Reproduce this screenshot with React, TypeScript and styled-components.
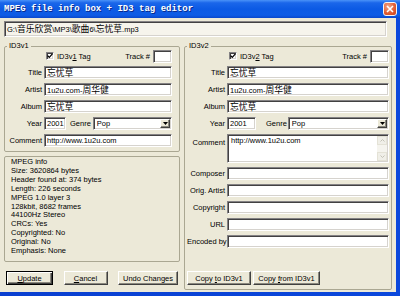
import React from 'react'
import styled, { createGlobalStyle, css } from 'styled-components'

const GlobalStyle = createGlobalStyle`
	html, body {
		margin: 0;
		padding: 0;
	}
	body {
		font-family: "Liberation Sans", Arial, "Noto Sans CJK SC", sans-serif;
		font-size: 7.5px;
		color: #000;
		background: #fff;
	}
`

// classic 3D edges, used by every edit box and every push button
const sunken = css`
	box-sizing: border-box;
	border: 1px solid;
	border-color: #848284 #fff #fff #848284;
	box-shadow: inset 1px 1px 0 #424142, inset -1px -1px 0 #d6d3ce;
`

const raised = css`
	box-sizing: border-box;
	border: 1px solid;
	border-color: #fff #404040 #404040 #fff;
	box-shadow: inset -1px -1px 0 #8a887e;
	background: #ece9d8;
`

const Window = styled.div`
	width: 400px;
	height: 296px;
	display: flex;
	flex-direction: column;
	background: linear-gradient(to right, #0a3fd0, #0b48dc);
	overflow: hidden;
`

const TitleBar = styled.div`
	height: 18px;
	flex: none;
	display: flex;
	align-items: center;
	padding: 0 3px 0 4px;
	background: linear-gradient(to bottom, #4a92f8 0%, #1a66ea 16%, #0c5ae4 50%, #0e5ce6 84%, #0a48cc 100%);
`

const Caption = styled.span`
	flex: 1;
	font-family: "Liberation Mono", "Courier New", monospace;
	font-weight: bold;
	font-size: 9px;
	color: #fff;
	white-space: nowrap;
	text-shadow: 1px 1px 0 #0a2a8a;
`

const CloseButton = styled.button`
	width: 14px;
	height: 14px;
	padding: 0;
	border: 1px solid #f4f4f4;
	border-radius: 3px;
	background: radial-gradient(circle at 35% 30%, #f2a486, #e15a30 60%, #c8441e);
	display: grid;
	place-items: center;
`

const Body = styled.div`
	flex: 1;
	min-height: 0;
	margin: 0 4px 4px 0;
	padding: 3px 4px 2px 4px;
	background: #ece9d8;
	display: flex;
	flex-direction: column;
	gap: 5px;
`

const PathField = styled.div`
	${sunken}
	height: 16px;
	margin-right: 5px;
	padding: 0 2px;
	background: #f6f4ec;
	line-height: 14px;
	white-space: nowrap;
`

const Cjk = styled.span`
	font-family: "Noto Sans CJK SC", sans-serif;
	font-size: 8.8px;
`

const Columns = styled.div`
	flex: 1;
	min-height: 0;
	display: grid;
	grid-template-columns: 176px 208px;
	column-gap: 4px;
`

const LeftColumn = styled.div`
	display: flex;
	flex-direction: column;
`

const Group = styled.fieldset<{ $padRight: number; $padBottom: number }>`
	margin: 0;
	min-inline-size: 0;
	padding: 0 ${p => p.$padRight}px ${p => p.$padBottom}px 2px;
	border: 1px solid #aaa792;
	border-radius: 2px;
	display: flex;
	flex-direction: column;
`

const Legend = styled.legend`
	padding: 0 2px;
	line-height: 8px;
`

const FormGrid = styled.div<{ $label: number }>`
	display: grid;
	grid-template-columns: ${p => p.$label}px 1fr;
	column-gap: 2px;
	row-gap: 4px;
	align-items: center;
`

const Label = styled.span<{ $top?: boolean }>`
	text-align: right;
	white-space: nowrap;
	${p => p.$top && css`
		align-self: start;
		margin-top: 4px;
	`}
`

const Field = styled.div<{ $w?: number }>`
	${sunken}
	height: 13px;
	padding: 0 2px;
	background: #fff;
	line-height: 11px;
	white-space: nowrap;
	overflow: hidden;
	${p => p.$w !== undefined && css`
		width: ${p.$w}px;
		flex: none;
	`}
`

const TagRow = styled.div`
	grid-column: 2;
	height: 12px;
	display: flex;
	align-items: center;
`

const CheckBox = styled.span`
	${sunken}
	width: 8px;
	height: 8px;
	margin: 0 3px 0 2px;
	background: #fff;
	display: grid;
	place-items: center;
`

const TrackLabel = styled.span`
	margin: 0 3px 0 auto;
`

const U = styled.span`
	text-decoration: underline;
`

const YearRow = styled.div`
	display: flex;
	align-items: center;
`

const GenreLabel = styled.span<{ $before: number; $after: number }>`
	margin: 0 ${p => p.$after}px 0 ${p => p.$before}px;
`

const Select = styled.div`
	${sunken}
	flex: 1;
	height: 13px;
	background: #fff;
	display: flex;
	padding: 1px;
`

const SelectText = styled.span`
	flex: 1;
	padding-left: 2px;
	line-height: 10px;
`

const DropButton = styled.span`
	${raised}
	width: 10px;
	display: grid;
	place-items: center;
`

const MemoBox = styled.div`
	${sunken}
	height: 29px;
	background: #fff;
	display: flex;
	padding: 1px;
`

const MemoText = styled.span`
	flex: 1;
	padding: 0 2px;
	line-height: 10px;
`

const ScrollBar = styled.div`
	width: 10px;
	display: flex;
	flex-direction: column;
	justify-content: space-between;
	background: #f5f4ee;
`

const ScrollArrow = styled.span`
	height: 9px;
	box-sizing: border-box;
	border: 1px solid #e4e2d6;
	background: #f0efe8;
	display: grid;
	place-items: center;
`

const InfoBox = styled.div`
	flex: 1;
	margin-top: 4px;
	padding: 1px 6px 0;
	border: 1px solid #aaa792;
	border-radius: 2px;
	line-height: 8.9px;
	white-space: nowrap;
`

const ButtonRow = styled.div<{ $spread?: boolean }>`
	display: flex;
	gap: 2px;
	${p => p.$spread && css`
		justify-content: space-between;
		padding: 0 2px;
		margin: 9px 0 5px;
	`}
`

const CopyRow = styled(ButtonRow)`
	margin-top: auto;
`

const Button = styled.button<{ $w: number; $default?: boolean }>`
	${raised}
	width: ${p => p.$w}px;
	height: 14px;
	padding: 0;
	font: inherit;
	color: #000;
	white-space: nowrap;
	${p => p.$default && css`
		border: 1px solid #000;
		box-shadow: inset 1px 1px 0 #fff, inset -1px -1px 0 #404040, inset -2px -2px 0 #8a887e;
	`}
`

const mpegInfo = [
	'MPEG info',
	'Size: 3620864 bytes',
	'Header found at: 374 bytes',
	'Length: 226 seconds',
	'MPEG 1.0 layer 3',
	'128kbit, 8682 frames',
	'44100Hz Stereo',
	'CRCs: Yes',
	'Copyrighted: No',
	'Original: No',
	'Emphasis: None',
]

const Check = () => (
	<svg width="6" height="6" viewBox="0 0 6 6">
		<path d="M0.6 2.6 L2.3 4.4 L5.4 0.9" fill="none" stroke="#000" strokeWidth="1.3" />
	</svg>
)

const Arrow = () => (
	<svg width="5" height="3" viewBox="0 0 5 3">
		<path d="M0 0 L5 0 L2.5 3 Z" fill="#000" />
	</svg>
)

const Chevron = ({ up }: { up?: boolean }) => (
	<svg width="5" height="3" viewBox="0 0 5 3">
		<path d={up ? 'M0.5 2.5 L2.5 0.5 L4.5 2.5' : 'M0.5 0.5 L2.5 2.5 L4.5 0.5'} fill="none" stroke="#c4c2b6" strokeWidth="1" />
	</svg>
)

type TagProps = {
	version: '1' | '2'
	yearWidth: number
	genreBefore: number
	genreAfter: number
}

// rows shared by both tag panels: tag switch, title, artist, album, year and genre
function TagFields({ version, yearWidth, genreBefore, genreAfter }: TagProps) {
	return (
		<>
			<TagRow>
				<CheckBox><Check /></CheckBox>
				<span>ID3v<U>{version}</U> Tag</span>
				<TrackLabel>Track #</TrackLabel>
				<Field $w={19} />
			</TagRow>

			<Label>Title</Label>
			<Field><Cjk>忘忧草</Cjk></Field>

			<Label>Artist</Label>
			<Field>1u2u.com-<Cjk>周华健</Cjk></Field>

			<Label>Album</Label>
			<Field><Cjk>忘忧草</Cjk></Field>

			<Label>Year</Label>
			<YearRow>
				<Field $w={yearWidth}>2001</Field>
				<GenreLabel $before={genreBefore} $after={genreAfter}>Genre</GenreLabel>
				<Select>
					<SelectText>Pop</SelectText>
					<DropButton><Arrow /></DropButton>
				</Select>
			</YearRow>
		</>
	)
}

export default function App() {
	return (
		<>
			<GlobalStyle />
			<Window>
				<TitleBar>
					<Caption>MPEG file info box + ID3 tag editor</Caption>
					<CloseButton aria-label="Close">
						<svg width="8" height="8" viewBox="0 0 8 8">
							<path d="M1 1 L7 7 M7 1 L1 7" stroke="#fff" strokeWidth="1.6" />
						</svg>
					</CloseButton>
				</TitleBar>

				<Body>
					<PathField>
						G:\<Cjk>音乐欣赏</Cjk>\MP3\<Cjk>歌曲</Cjk>6\<Cjk>忘忧草</Cjk>.mp3
					</PathField>

					<Columns>
						<LeftColumn>
							<Group $padRight={7} $padBottom={4}>
								<Legend>ID3v1</Legend>
								<FormGrid $label={35}>
									<TagFields version="1" yearWidth={22} genreBefore={4} genreAfter={2} />
									<Label>Comment</Label>
									<Field>http://www.1u2u.com</Field>
								</FormGrid>
							</Group>

							<InfoBox>
								{mpegInfo.map(line => <div key={line}>{line}</div>)}
							</InfoBox>

							<ButtonRow $spread>
								<Button $w={47} $default><U>U</U>pdate</Button>
								<Button $w={44}><U>C</U>ancel</Button>
								<Button $w={60}>Undo Changes</Button>
							</ButtonRow>
						</LeftColumn>

						<Group $padRight={2} $padBottom={4}>
							<Legend>ID3v2</Legend>
							<FormGrid $label={38}>
								<TagFields version="2" yearWidth={29} genreBefore={10} genreAfter={1} />

								<Label $top>Comment</Label>
								<MemoBox>
									<MemoText>http://www.1u2u.com</MemoText>
									<ScrollBar>
										<ScrollArrow><Chevron up /></ScrollArrow>
										<ScrollArrow><Chevron /></ScrollArrow>
									</ScrollBar>
								</MemoBox>

								<Label>Composer</Label>
								<Field />
								<Label>Orig. Artist</Label>
								<Field />
								<Label>Copyright</Label>
								<Field />
								<Label>URL</Label>
								<Field />
								<Label>Encoded by</Label>
								<Field />
							</FormGrid>

							<CopyRow>
								<Button $w={64}>Copy <U>t</U>o ID3v1</Button>
								<Button $w={67}>Copy <U>f</U>rom ID3v1</Button>
							</CopyRow>
						</Group>
					</Columns>
				</Body>
			</Window>
		</>
	)
}
